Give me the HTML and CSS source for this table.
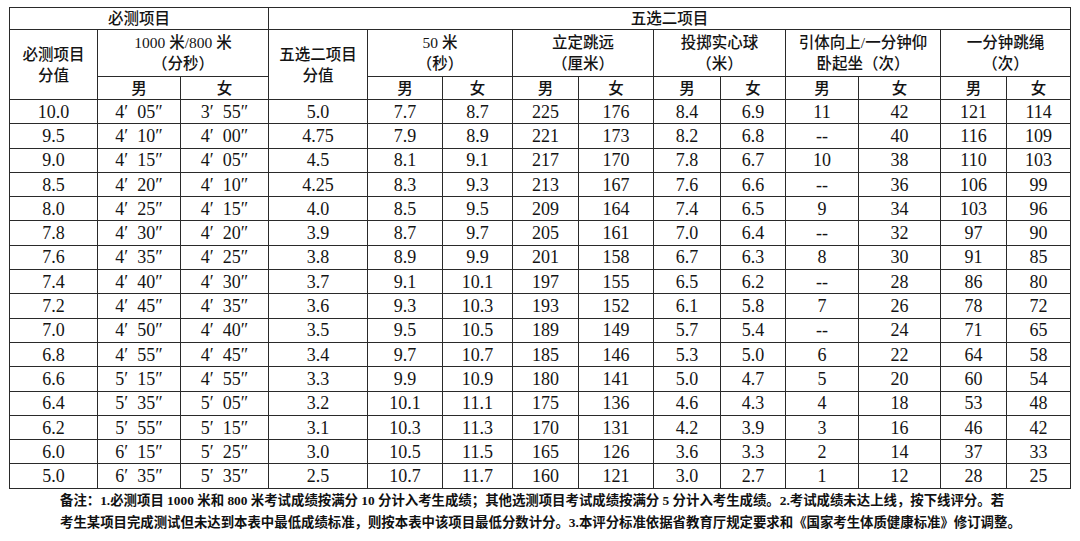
FILE: index.html
```html
<!DOCTYPE html>
<html lang="zh-CN">
<head>
<meta charset="utf-8">
<title>评分标准</title>
<link rel="stylesheet" href="styles.css">
</head>
<body>
<div class="page">
<table class="score">
<colgroup>
<col class="c88"><col class="c83"><col class="c88"><col class="c99"><col class="c75"><col class="c70"><col class="c66"><col class="c75"><col class="c67"><col class="c65"><col class="c73"><col class="c82"><col class="c66"><col class="c64">
</colgroup>
<thead>
<tr class="h1"><th colspan="3">必测项目</th><th colspan="11">五选二项目</th></tr>
<tr class="h2">
<th rowspan="2">必测项目<br>分值</th>
<th colspan="2">1000 米/800 米<br>（分秒）</th>
<th rowspan="2">五选二项目<br>分值</th>
<th colspan="2">50 米<br>（秒）</th>
<th colspan="2">立定跳远<br>（厘米）</th>
<th colspan="2">投掷实心球<br>（米）</th>
<th colspan="2">引体向上/一分钟仰<br>卧起坐（次）</th>
<th colspan="2">一分钟跳绳<br>（次）</th>
</tr>
<tr class="h3">
<th>男</th><th>女</th>
<th>男</th><th>女</th><th>男</th><th>女</th><th>男</th><th>女</th><th>男</th><th>女</th><th>男</th><th>女</th>
</tr>
</thead>
<tbody>
<tr><td>10.0</td><td>4′&ensp;05″</td><td>3′&ensp;55″</td><td>5.0</td><td>7.7</td><td>8.7</td><td>225</td><td>176</td><td>8.4</td><td>6.9</td><td>11</td><td>42</td><td>121</td><td>114</td></tr>
<tr><td>9.5</td><td>4′&ensp;10″</td><td>4′&ensp;00″</td><td>4.75</td><td>7.9</td><td>8.9</td><td>221</td><td>173</td><td>8.2</td><td>6.8</td><td>--</td><td>40</td><td>116</td><td>109</td></tr>
<tr><td>9.0</td><td>4′&ensp;15″</td><td>4′&ensp;05″</td><td>4.5</td><td>8.1</td><td>9.1</td><td>217</td><td>170</td><td>7.8</td><td>6.7</td><td>10</td><td>38</td><td>110</td><td>103</td></tr>
<tr><td>8.5</td><td>4′&ensp;20″</td><td>4′&ensp;10″</td><td>4.25</td><td>8.3</td><td>9.3</td><td>213</td><td>167</td><td>7.6</td><td>6.6</td><td>--</td><td>36</td><td>106</td><td>99</td></tr>
<tr><td>8.0</td><td>4′&ensp;25″</td><td>4′&ensp;15″</td><td>4.0</td><td>8.5</td><td>9.5</td><td>209</td><td>164</td><td>7.4</td><td>6.5</td><td>9</td><td>34</td><td>103</td><td>96</td></tr>
<tr><td>7.8</td><td>4′&ensp;30″</td><td>4′&ensp;20″</td><td>3.9</td><td>8.7</td><td>9.7</td><td>205</td><td>161</td><td>7.0</td><td>6.4</td><td>--</td><td>32</td><td>97</td><td>90</td></tr>
<tr><td>7.6</td><td>4′&ensp;35″</td><td>4′&ensp;25″</td><td>3.8</td><td>8.9</td><td>9.9</td><td>201</td><td>158</td><td>6.7</td><td>6.3</td><td>8</td><td>30</td><td>91</td><td>85</td></tr>
<tr><td>7.4</td><td>4′&ensp;40″</td><td>4′&ensp;30″</td><td>3.7</td><td>9.1</td><td>10.1</td><td>197</td><td>155</td><td>6.5</td><td>6.2</td><td>--</td><td>28</td><td>86</td><td>80</td></tr>
<tr><td>7.2</td><td>4′&ensp;45″</td><td>4′&ensp;35″</td><td>3.6</td><td>9.3</td><td>10.3</td><td>193</td><td>152</td><td>6.1</td><td>5.8</td><td>7</td><td>26</td><td>78</td><td>72</td></tr>
<tr><td>7.0</td><td>4′&ensp;50″</td><td>4′&ensp;40″</td><td>3.5</td><td>9.5</td><td>10.5</td><td>189</td><td>149</td><td>5.7</td><td>5.4</td><td>--</td><td>24</td><td>71</td><td>65</td></tr>
<tr><td>6.8</td><td>4′&ensp;55″</td><td>4′&ensp;45″</td><td>3.4</td><td>9.7</td><td>10.7</td><td>185</td><td>146</td><td>5.3</td><td>5.0</td><td>6</td><td>22</td><td>64</td><td>58</td></tr>
<tr><td>6.6</td><td>5′&ensp;15″</td><td>4′&ensp;55″</td><td>3.3</td><td>9.9</td><td>10.9</td><td>180</td><td>141</td><td>5.0</td><td>4.7</td><td>5</td><td>20</td><td>60</td><td>54</td></tr>
<tr><td>6.4</td><td>5′&ensp;35″</td><td>5′&ensp;05″</td><td>3.2</td><td>10.1</td><td>11.1</td><td>175</td><td>136</td><td>4.6</td><td>4.3</td><td>4</td><td>18</td><td>53</td><td>48</td></tr>
<tr><td>6.2</td><td>5′&ensp;55″</td><td>5′&ensp;15″</td><td>3.1</td><td>10.3</td><td>11.3</td><td>170</td><td>131</td><td>4.2</td><td>3.9</td><td>3</td><td>16</td><td>46</td><td>42</td></tr>
<tr><td>6.0</td><td>6′&ensp;15″</td><td>5′&ensp;25″</td><td>3.0</td><td>10.5</td><td>11.5</td><td>165</td><td>126</td><td>3.6</td><td>3.3</td><td>2</td><td>14</td><td>37</td><td>33</td></tr>
<tr><td>5.0</td><td>6′&ensp;35″</td><td>5′&ensp;35″</td><td>2.5</td><td>10.7</td><td>11.7</td><td>160</td><td>121</td><td>3.0</td><td>2.7</td><td>1</td><td>12</td><td>28</td><td>25</td></tr>
</tbody>
</table>
<div class="note">
<div class="line">备注：1.必测项目 1000 米和 800 米考试成绩按满分 10 分计入考生成绩；其他选测项目考试成绩按满分 5 分计入考生成绩。2.考试成绩未达上线，按下线评分。若</div>
<div class="line">考生某项目完成测试但未达到本表中最低成绩标准，则按本表中该项目最低分数计分。3.本评分标准依据省教育厅规定要求和《国家考生体质健康标准》修订调整。</div>
</div>
</div>
</body>
</html>
```
FILE: styles.css
```css
html, body {
  margin: 0;
  padding: 0;
  background: #ffffff;
}
.page {
  width: 1080px;
  height: 541px;
  padding: 7px 0 0 9px;
  box-sizing: border-box;
  color: #141414;
  overflow: hidden;
}
.score {
  border-collapse: collapse;
  table-layout: fixed;
  width: 1062px;
}
.c88 { width: 88px; }
.c83 { width: 83px; }
.c99 { width: 99px; }
.c75 { width: 75px; }
.c70 { width: 70px; }
.c66 { width: 66px; }
.c67 { width: 67px; }
.c65 { width: 65px; }
.c73 { width: 73px; }
.c82 { width: 82px; }
.c64 { width: 64px; }
.score th,
.score td {
  border: 1px solid #2a2a2a;
  padding: 0;
  text-align: center;
  vertical-align: middle;
  white-space: nowrap;
  overflow: hidden;
}
.score th {
  font-family: "Liberation Serif", "Noto Sans CJK SC", serif;
  font-weight: 500;
  font-size: 15.5px;
  line-height: 21px;
}
.score .h1 th { height: 21px; }
.score .h2 th { height: 46px; }
.score .h3 th { height: 22px; }
.score td {
  font-family: "Liberation Serif", "Noto Sans CJK SC", serif;
  font-size: 18px;
  height: 23.3px;
  line-height: 20px;
}
.note {
  padding: 1px 0 0 51px;
  font-family: "Liberation Serif", "Noto Sans CJK SC", serif;
  font-weight: 700;
  font-size: 13.4px;
  line-height: 22px;
  color: #111111;
}
.note .line {
  white-space: nowrap;
}
```
